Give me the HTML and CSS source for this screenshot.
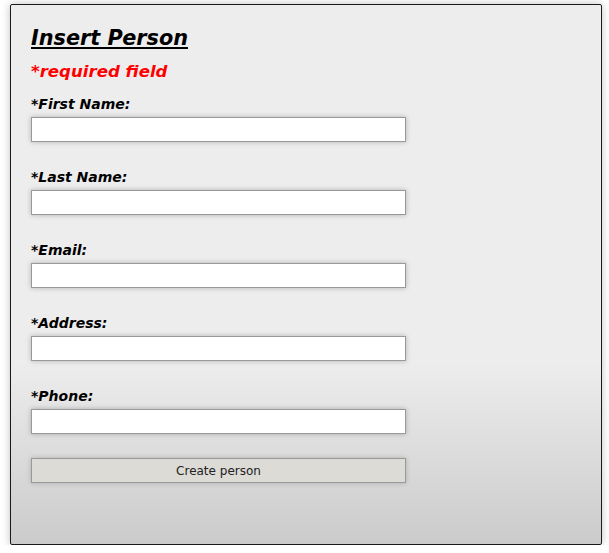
FILE: index.html
```html
<!DOCTYPE html>
<html>
<head>
<meta charset="utf-8">
<link rel="stylesheet" href="styles.css">
</head>
<body>
<div class="panel">
  <h2 class="title">Insert Person</h2>
  <p class="required">*required field</p>
  <form class="form">
    <div class="field">
      <label class="label">*First Name:</label>
      <input class="input" type="text">
    </div>
    <div class="field">
      <label class="label">*Last Name:</label>
      <input class="input" type="text">
    </div>
    <div class="field">
      <label class="label">*Email:</label>
      <input class="input" type="text">
    </div>
    <div class="field">
      <label class="label">*Address:</label>
      <input class="input" type="text">
    </div>
    <div class="field">
      <label class="label">*Phone:</label>
      <input class="input" type="text">
    </div>
    <button class="button" type="button">Create person</button>
  </form>
</div>
</body>
</html>
```

FILE: styles.css
```css
html, body {
  margin: 0;
  padding: 0;
  background: #ffffff;
}

body {
  font-family: "DejaVu Sans", sans-serif;
}

.panel {
  box-sizing: border-box;
  margin: 4px 0 0 10px;
  width: 592px;
  height: 541px;
  border: 1px solid #1a1a1a;
  border-radius: 2px;
  padding: 20px 20px 0 20px;
  background: linear-gradient(to bottom, #ededed 0%, #ededed 66%, #cbcbcb 100%);
  box-shadow: 0 0 8px rgba(0, 0, 0, 0.25);
}

.title {
  margin: 0;
  font-size: 20.8px;
  line-height: 26px;
  font-weight: bold;
  font-style: italic;
  text-decoration: underline;
  color: #000;
}

.required {
  margin: 11px 0 0 0;
  font-size: 16.6px;
  line-height: 20px;
  font-weight: bold;
  font-style: italic;
  color: #ff0000;
}

.form {
  margin: 14px 0 0 0;
  display: flex;
  flex-direction: column;
}

.field {
  display: flex;
  flex-direction: column;
  gap: 5px;
  margin-bottom: 27px;
}

.label {
  display: block;
  font-size: 14px;
  line-height: 16px;
  font-weight: bold;
  font-style: italic;
  color: #000;
}

.input {
  box-sizing: border-box;
  width: 375px;
  height: 25px;
  margin: 0;
  border: 1px solid #999999;
  background: #ffffff;
  box-shadow: 0 0 5px rgba(0, 0, 0, 0.25);
  font-family: "DejaVu Sans", sans-serif;
  font-size: 13px;
  padding: 0 4px;
}

.button {
  box-sizing: border-box;
  margin-top: -3px;
  width: 375px;
  height: 25px;
  border: 1px solid #999999;
  border-radius: 0;
  background: #dcdbd6;
  box-shadow: 0 0 5px rgba(0, 0, 0, 0.2);
  font-family: "DejaVu Sans", sans-serif;
  font-size: 12px;
  color: #222;
  padding: 0;
}
```
